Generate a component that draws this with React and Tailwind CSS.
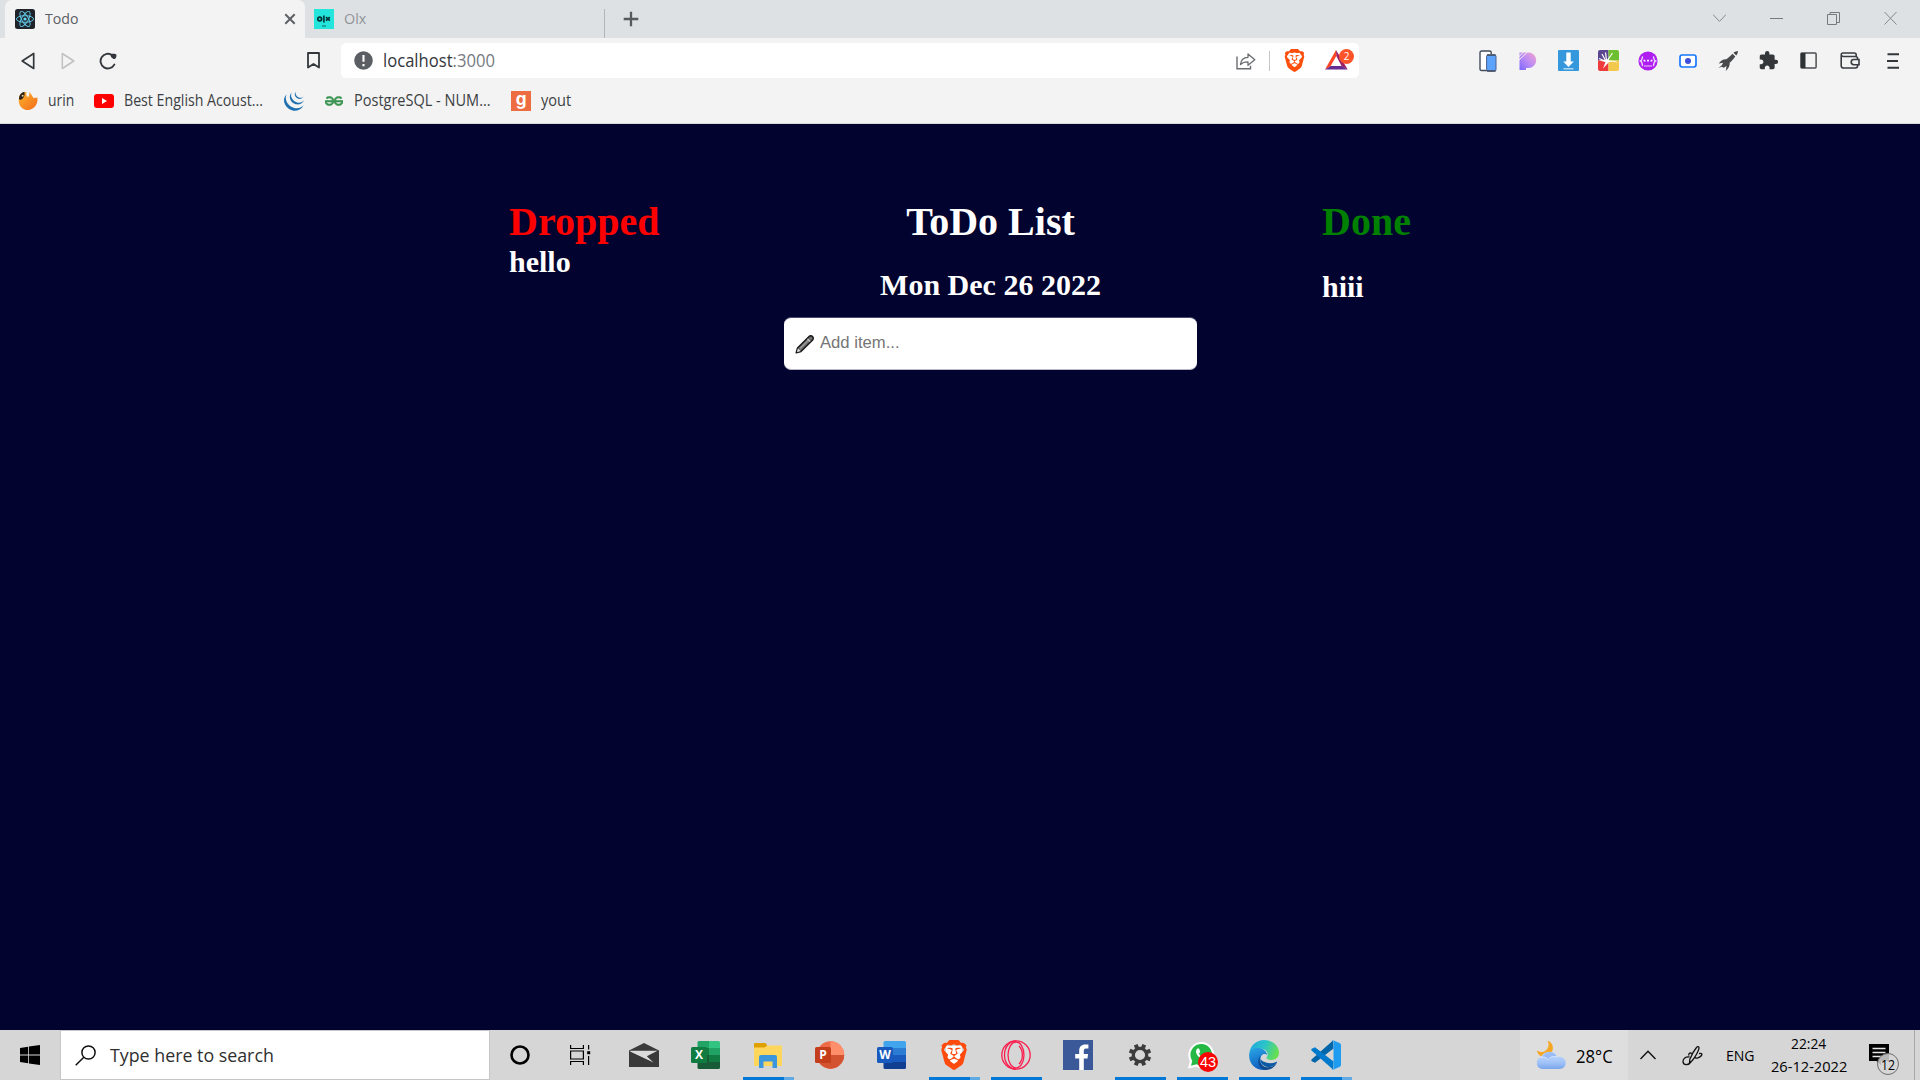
import React, { useLayoutEffect, useRef, useState } from "react";
import { SiBrave, SiJquery, SiGeeksforgeeks } from "react-icons/si";
import { MdExtension } from "react-icons/md";

const UI_FONT = "font-['Open_Sans','Noto_Sans',sans-serif]";

/* Label squeezed horizontally so that it occupies exactly `width` pixels. */
function Label({ width, className = "", children }) {
  const ref = useRef(null);
  const [scale, setScale] = useState(1);
  useLayoutEffect(() => {
    setScale(width / ref.current.offsetWidth);
  }, [width]);
  return (
    <span className="block shrink-0 leading-none" style={{ width }}>
      <span
        ref={ref}
        className={`inline-block origin-left whitespace-nowrap leading-none ${className}`}
        style={{ transform: `scaleX(${scale})` }}
      >
        {children}
      </span>
    </span>
  );
}

const Svg = ({ w, h, vb, className = "", children }) => (
  <svg width={w} height={h} viewBox={vb || `0 0 ${w} ${h}`} fill="none" className={`block shrink-0 ${className}`}>
    {children}
  </svg>
);

const ReactLogo = () => (
  <Svg w={20} h={20}>
    <rect width="20" height="20" rx="2.5" fill="#20232a" />
    <g stroke="#61c9e8" strokeWidth="0.95">
      <ellipse cx="10" cy="10" rx="8.6" ry="3.3" />
      <ellipse cx="10" cy="10" rx="8.6" ry="3.3" transform="rotate(60 10 10)" />
      <ellipse cx="10" cy="10" rx="8.6" ry="3.3" transform="rotate(120 10 10)" />
    </g>
    <circle cx="10" cy="10" r="1.6" fill="#61dafb" />
  </Svg>
);

const OlxLogo = () => (
  <Svg w={20} h={20}>
    <rect width="20" height="20" fill="#23e5db" />
    <circle cx="5.7" cy="10" r="1.9" stroke="#002f34" strokeWidth="1.7" />
    <path d="M9.9 6.6v6.8" stroke="#002f34" strokeWidth="1.6" />
    <path d="M12 8.2l3.8 3.4M15.8 8.2L12 11.6" stroke="#002f34" strokeWidth="1.7" />
    <path d="M8 17h4" stroke="#002f34" strokeWidth="0.7" />
  </Svg>
);

function TabStrip() {
  return (
    <div className="flex h-[38px] bg-[#dee1e4] pl-[5px]">
      <div className="flex h-full w-[300px] items-center rounded-t-[7px] bg-[#f3f3f3] pl-[10px] pr-[9px]">
        <ReactLogo />
        <div className="-mt-[2px] ml-[10px] flex-1">
          <Label width={34} className="text-[15px] text-[#5a5e62]">Todo</Label>
        </div>
        <Svg w={12} h={12}>
          <path d="M1.3 1.3l9.4 9.4M10.7 1.3L1.3 10.7" stroke="#5c6064" strokeWidth="2" />
        </Svg>
      </div>
      <div className="flex w-[299px] items-center pl-[9px]">
        <OlxLogo />
        <div className="-mt-[2px] ml-[10px]">
          <Label width={22} className="text-[15px] text-[#8f9498]">Olx</Label>
        </div>
      </div>
      <div className="h-[29px] w-px self-end bg-[#b3b6b9]" />
      <Svg w={16} h={16} className="ml-[18px] mt-[11px]">
        <path d="M8 .7v14.6M.7 8h14.6" stroke="#56595d" strokeWidth="2.3" />
      </Svg>
      <div className="ml-auto mr-[23px] flex h-[36px] items-center gap-[44px]">
        <Svg w={13} h={14}><path d="M0 3.500l6.500 7 6.500-7" stroke="#85888b" /></Svg>
        <Svg w={13} h={14}><path d="M0 7.500h13" stroke="#777a7d" /></Svg>
        <Svg w={13} h={14}>
          <path d="M.5 3.500h9v10h-9z" stroke="#777a7d" />
          <path d="M3 3V1.500h9.500v10H10" stroke="#777a7d" />
        </Svg>
        <Svg w={13} h={14}><path d="M.5 1l12 12.500M12.500 1L.5 13.500" stroke="#85888b" /></Svg>
      </div>
    </div>
  );
}

const BraveTriangle = () => (
  <div className="relative ml-[19px] h-[26px] w-[30px]">
    <Svg w={23} h={20} className="mt-[4px]">
      <path d="M11 0L0 19.500l5.500-3.200L11.300 6z" fill="#ff4724" />
      <path d="M11 0l11.700 19.500-6-3.200L11.300 6z" fill="#9e1f63" />
      <path d="M0 19.500h22.700l-6-3.600H5.700z" fill="#662d91" />
    </Svg>
    <div className={`absolute left-[14px] top-[-1px] flex h-[15px] w-[15px] items-center justify-center rounded-full bg-[#fb542b] text-[10px] leading-none text-white ${UI_FONT}`}>
      2
    </div>
  </div>
);

const extensions = [
  <Svg key="phone" w={18} h={22}>
    <path d="M8 20.500H2.400A1.400 1.400 0 011 19V2.600A1.600 1.600 0 012.600 1h8a1.600 1.600 0 011.600 1.600V4" fill="#fff" stroke="#434b5c" strokeWidth="1.400" />
    <rect x="7.600" y="5" width="9.400" height="16" rx="1.400" fill="#5ea3fb" stroke="#46618f" />
    <path d="M8 5h8.600M8 21h8.600" stroke="#434b5c" strokeWidth="1.300" />
  </Svg>,
  <Svg key="p" w={18} h={18}>
    <defs>
      <linearGradient id="pGrad" x1="1" y1="0" x2="0" y2="1">
        <stop offset="0" stopColor="#f6a4cf" /><stop offset=".5" stopColor="#bd8cf3" /><stop offset="1" stopColor="#7c66ff" />
      </linearGradient>
    </defs>
    <path d="M.5.500h9a7.700 7.700 0 010 15.500H7v2H.5z" fill="url(#pGrad)" />
    <path d="M0 4.500L4.700 0M0 8L8.500 0" stroke="#f3f3f3" strokeWidth="1" />
  </Svg>,
  <Svg key="dl" w={21} h={21}>
    <rect width="21" height="21" rx="1" fill="#3598dc" />
    <path d="M8.300 2.500h4.400v9h3.100L10.500 17l-5.300-5.500h3.100z" fill="#fff" />
    <path d="M5.500 18.800h10" stroke="#b8dcf5" strokeWidth="1.400" />
  </Svg>,
  <Svg key="quad" w={21} h={21}>
    <path d="M2 0h8.500v10.500H0V2a2 2 0 012-2z" fill="#5b4691" />
    <path d="M10.500 0H19a2 2 0 012 2v8.500H10.500z" fill="#6cbf2e" />
    <path d="M0 10.500h10.500V21H2a2 2 0 01-2-2z" fill="#ee3b3b" />
    <path d="M10.500 10.500H21V19a2 2 0 01-2 2h-8.500z" fill="#f2c94c" />
    <path d="M7.500 10.500L4 4M8.500 10L7.500 2.500M7 11L1 8.500M10 9.500L14.500 3" stroke="#fff" strokeWidth="1.200" />
    <path d="M1 10.500c3.500-.3 6 0 8-1l1.500-1 .5 2c3.500-.3 7 .3 9.500 2.500-3-1.300-6.500-1.500-9.500-1L5 18.500l2.500-6.500z" fill="#fff" />
  </Svg>,
  <Svg key="purple" w={20} h={20}>
    <circle cx="10" cy="10" r="9.600" fill="#ae1ef0" />
    <path d="M4.800 5.500c-1.300 1.500 0 3.500-2.300 4.500 2.300 1 1 3 2.300 5M15.200 5.500c1.300 1.500 0 3.500 2.300 4.500-2.300 1-1 3-2.300 5" stroke="#efd5fb" strokeWidth="1.400" />
    <path d="M5.600 9.600h1.800M9.100 9.600h1.800M12.600 9.600h1.800" stroke="#fff" strokeWidth="1.600" />
    <path d="M6 15h8" stroke="#d68af5" strokeWidth="1.600" />
  </Svg>,
  <Svg key="cam" w={18} h={14}>
    <rect x="1" y="1" width="16" height="12" rx="2.200" fill="#fff" stroke="#1677ff" strokeWidth="1.700" />
    <circle cx="9" cy="7" r="3" fill="#3f4fd8" />
  </Svg>,
  <Svg key="rocket" w={20} h={20}>
    <path d="M20 0c-1 0-3.500.8-4.500 1.700l2.800 2.800C19.200 3.500 20 1 20 0z" fill="#444" />
    <path d="M14.600 2.700C12 5 10 7 8.300 8.300c-2.500-.3-5.500 1-7.600 4.300l4.400-.9-1.300 2.600L.5 17l3.200-1.200 2.100.9L8.500 15l-.700 5c2.700-2.500 4.300-5.500 3.900-8.200C13.500 10 15.600 8 17.300 5.400z" fill="#484a4c" />
  </Svg>,
  <MdExtension key="puzzle" size={21} color="#33373a" />,
  <Svg key="side" w={17} h={17}>
    <rect x=".9" y=".9" width="15.200" height="15.200" rx="1" stroke="#4b4e52" strokeWidth="1.500" />
    <path d="M1 1h4.500v15H1z" fill="#2f3235" />
  </Svg>,
  <Svg key="wallet" w={20} h={17}>
    <path d="M1.200 3.500v10.300a2.200 2.200 0 002.200 2.200h12a2.200 2.200 0 002.200-2.200V6.700a2.200 2.200 0 00-2.200-2.200H3.200a2 2 0 01-2-1.800A1.700 1.700 0 012.900 1h11.300a2 2 0 012 2v1.500" stroke="#393c40" strokeWidth="1.600" />
    <path d="M19 7.500h-5.200a2.600 2.600 0 000 5.200H19z" fill="#f3f3f3" stroke="#393c40" strokeWidth="1.600" />
  </Svg>,
  <Svg key="menu" w={12} h={16}>
    <path d="M.5 1.300h11.500M0 8h11M.5 14.700h11.500" stroke="#33373a" strokeWidth="2" />
  </Svg>,
];

function Toolbar() {
  return (
    <div className="flex h-[45px] items-center bg-[#f3f3f3]">
      <Svg w={14} h={18} className="ml-[21px]"><path d="M12.700 1.500v15L1.200 9z" stroke="#33373b" strokeWidth="1.700" strokeLinejoin="round" /></Svg>
      <Svg w={14} h={18} className="ml-[26px]"><path d="M1.300 1.500v15L12.800 9z" stroke="#bfc1c3" strokeWidth="1.500" strokeLinejoin="round" /></Svg>
      <Svg w={18} h={18} className="ml-[24px]">
        <path d="M15.300 12.600A7.300 7.300 0 1113.300 3.300" stroke="#33373b" strokeWidth="1.900" strokeLinecap="round" />
        <path d="M11.500 2.200c2-.7 5.400-.6 5.800.3.500 1.200-.2 4-1.500 4.500-2.300.3-4.800-2.800-4.300-4.800z" fill="#33373b" />
      </Svg>
      <Svg w={13} h={17} className="ml-[190px]"><path d="M1 1h11v14.500l-5.500-3.600L1 15.500z" stroke="#33373b" strokeWidth="1.800" strokeLinejoin="round" /></Svg>
      <div className="ml-[21px] flex h-[35px] w-[1018px] items-center rounded-[5px] bg-white pl-[13px]">
        <Svg w={19} h={19}>
          <circle cx="9.500" cy="9.500" r="9.300" fill="#5b5f63" />
          <path d="M9.500 4v6.800M9.500 13v2.200" stroke="#fff" strokeWidth="2.100" />
        </Svg>
        <div className="ml-[10px] flex-1">
          <Label width={112} className="text-[17.5px] text-[#33373b]">
            localhost<span className="text-[#777b7f]">:3000</span>
          </Label>
        </div>
        <Svg w={20} h={18}>
          <path d="M1 4.500v12.300h13.500v-3" stroke="#696c70" strokeWidth="1.400" />
          <path d="M4.500 12.500c.4-4.500 3-7 7.500-7.200V2l6.800 5.700L12 13.300V9.800c-3.500-.1-5.700.7-7.500 2.700z" stroke="#696c70" strokeWidth="1.300" strokeLinejoin="round" />
        </Svg>
        <div className="ml-[13px] h-[20px] w-px bg-[#c4c6c8]" />
        <SiBrave size={23} color="#fb4f0b" className="ml-[13px] shrink-0" />
        <div className="w-[53px]"><BraveTriangle /></div>
      </div>
      <div className="ml-[108px] grid grid-cols-[41px_40px_40px_40px_40px_40px_40px_40px_40px_44px_42px] items-center justify-items-center">
        {extensions}
      </div>
    </div>
  );
}

const FoxIcon = () => (
  <Svg w={20} h={20}>
    <defs>
      <linearGradient id="fox" x1="0" y1="0" x2="1" y2="1"><stop offset="0" stopColor="#ffb52e" /><stop offset="1" stopColor="#f26a1b" /></linearGradient>
    </defs>
    <path d="M1.500 5C3 2 6 .5 8.500 1c-.5 1.500-.5 4 1.500 5 1.500-.8 1.500-3 1.300-5.300.8 1.300 2.200 2.300 3.200 4.800l1 1.500 3.800-.5c1.200 6.500-3.300 12.300-9.300 12.500C3 19-1 12.500 1.500 5z" fill="url(#fox)" />
    <path d="M1 8C1 4.500 3 1.600 6.300.8 7.300 4 6 7.500 2.500 9z" fill="#2a211b" />
    <circle cx="4.700" cy="4.800" r="1" fill="#f5d089" />
  </Svg>
);

function Bookmarks() {
  const text = "text-[16px] text-[#3b3f43]";
  return (
    <div className="flex h-[41px] items-center border-b border-[#d7dade] bg-[#f3f3f3] pb-[4px] pl-[18px]">
      <FoxIcon />
      <div className="-mt-[2px] ml-[10px]"><Label width={26} className={text}>urin</Label></div>
      <Svg w={20} h={14} className="ml-[20px]">
        <rect width="20" height="14" rx="3" fill="#f00" /><path d="M8 4l5 3-5 3z" fill="#fff" />
      </Svg>
      <div className="-mt-[2px] ml-[10px]"><Label width={139} className={text}>Best English Acoust...</Label></div>
      <SiJquery size={20} color="#1d6fb0" className="ml-[21px] shrink-0" />
      <SiGeeksforgeeks size={18} color="#3a9450" stroke="#3a9450" strokeWidth={0.8} className="ml-[21px] shrink-0" />
      <div className="-mt-[2px] ml-[11px]"><Label width={137} className={text}>PostgreSQL - NUM...</Label></div>
      <div className="ml-[20px] flex h-[20px] w-[20px] justify-center bg-[#ee6c41] font-['Inter',sans-serif] text-[17px] font-bold leading-[16px] text-white">g</div>
      <div className="-mt-[2px] ml-[10px]"><Label width={30} className={text}>yout</Label></div>
    </div>
  );
}

function TodoPage() {
  return (
    <main className="grid h-[906px] grid-cols-[274px_413px_1fr] items-start bg-[#02042f] pl-[510px] pt-[75px] font-['Liberation_Serif',serif] font-bold text-white">
      <section className="-ml-[1px]">
        <h1 className="text-[40px] leading-[46px] text-[#ff0000]">Dropped</h1>
        <h2 className="text-[30px] leading-[34px]">hello</h2>
      </section>
      <section className="text-center">
        <h1 className="text-[40px] leading-[46px]">ToDo List</h1>
        <h2 className="mt-[23px] text-[30px] leading-[34px]">Mon Dec 26 2022</h2>
        <div className="mt-[15px] flex h-[53px] items-center rounded-[7px] border-b border-t border-b-[#b9b9c6] border-t-[#4a4b6c] bg-white pl-[11px] text-left">
          <Svg w={20} h={20}>
            <path d="M1.200 18.800L2.500 14 14.300 2.200a2.600 2.600 0 013.600 3.600L6 17.600z" fill="#6b6b6b" stroke="#151515" strokeWidth="1.400" strokeLinejoin="round" />
            <path d="M5 14.500L14 5.500" stroke="#9a9a9a" strokeWidth="1.400" />
            <path d="M12.500 5l2.600 2.600" stroke="#c4c4c4" strokeWidth="1.200" />
            <path d="M2.900 14.500l2.600 2.500-3.600 1.200z" fill="#e4e4e4" />
          </Svg>
          <input
            placeholder="Add item..."
            className="ml-[5px] w-[340px] bg-transparent font-['Liberation_Sans',sans-serif] text-[16.670px] font-normal text-black outline-none placeholder:text-[#757575]"
          />
        </div>
      </section>
      <section className="pl-[125px]">
        <h1 className="text-[40px] leading-[46px] text-[#008000]">Done</h1>
        <h2 className="mt-[25px] text-[30px] leading-[34px]">hiii</h2>
      </section>
    </main>
  );
}

const OfficeBadge = ({ color, y = 7, children }) => (
  <>
    <rect x="0" y={y} width="16" height="16" rx="1.500" fill={color} />
    <text x="8" y={y + 12.200} textAnchor="middle" fontSize="12" fontWeight="700" fill="#fff" fontFamily="Open Sans, sans-serif">{children}</text>
  </>
);

const Excel = () => (
  <Svg w={30} h={28}>
    <path d="M8 0h10v7H6.500V1.500A1.500 1.500 0 018 0z" fill="#21a366" /><path d="M18 0h9.500A1.500 1.500 0 0129 1.500V7H18z" fill="#33c481" />
    <path d="M6.500 7H18v7H6.500z" fill="#107c41" /><path d="M18 7h11v7H18z" fill="#21a366" />
    <path d="M6.500 14H18v7H6.500z" fill="#185c37" /><path d="M18 14h11v7H18z" fill="#107c41" />
    <path d="M6.500 21H29v5.500a1.500 1.500 0 01-1.500 1.500H8a1.500 1.500 0 01-1.500-1.500z" fill="#185c37" />
    <OfficeBadge color="#107c41" y={6}>X</OfficeBadge>
  </Svg>
);
const Folder = () => (
  <Svg w={28} h={25}>
    <path d="M1 0h10.500L13 2v3H0V1a1 1 0 011-1z" fill="#e0a000" />
    <path d="M0 4.500h10.500l3-2H27a1 1 0 011 1V22a1 1 0 01-1 1H1a1 1 0 01-1-1z" fill="#ffd65c" />
    <path d="M5 25V14a2 2 0 012-2h14a2 2 0 012 2v11h-4.500v-6.500h-9V25z" fill="#3a96dd" />
  </Svg>
);
const PowerPoint = () => (
  <Svg w={30} h={28}>
    <circle cx="15.500" cy="14" r="13.700" fill="#ed6c47" />
    <path d="M15.500.3A13.700 13.700 0 0129.200 14H15.500z" fill="#ff8f6b" />
    <path d="M29.200 14a13.700 13.700 0 01-26 6L10 14z" fill="#d35230" />
    <OfficeBadge color="#c43e1c" y={6}>P</OfficeBadge>
  </Svg>
);
const Word = () => (
  <Svg w={30} h={28}>
    <path d="M8 0h19.500A1.500 1.500 0 0129 1.500V7H6.500V1.500A1.500 1.500 0 018 0z" fill="#41a5ee" />
    <path d="M6.500 7H29v7H6.500z" fill="#2b7cd3" /><path d="M6.500 14H29v7H6.500z" fill="#185abd" />
    <path d="M6.500 21H29v5.500a1.500 1.500 0 01-1.500 1.500H8a1.500 1.500 0 01-1.500-1.500z" fill="#103f91" />
    <OfficeBadge color="#185abd" y={6}>W</OfficeBadge>
  </Svg>
);
const Mail = () => (
  <Svg w={30} h={24}>
    <path d="M0 7.500L15 0l15 7.500V24H0z" fill="#3a3a3a" />
    <path d="M1.500 7.800h27L17.800 13.300 24.500 19.500 1 8.500z" fill="#dcdcdc" />
  </Svg>
);
const Brave = () => (
  <div className="relative flex h-[30px] w-[30px] items-center justify-center">
    <Svg w={20} h={22} className="absolute left-[5px] top-[4px]"><path d="M2 2h16v11l-8 8-8-8z" fill="#fff" /></Svg>
    <SiBrave size={30} color="#ff4a0e" className="relative" />
  </div>
);
const Opera = () => (
  <Svg w={30} h={30}>
    <g stroke="#fa1e4e" strokeWidth="1.300">
      <circle cx="15" cy="15" r="14.200" />
      <ellipse cx="15" cy="15" rx="8" ry="13" />
      <path d="M15 .8C9 .8 3.500 6.500 3.500 15S9 29.200 15 29.200M18 6c4.500 4.500 4.500 13.500 0 18" />
    </g>
  </Svg>
);
const Facebook = () => (
  <Svg w={30} h={30}>
    <path d="M0 0h30v30H0z" fill="#3b5998" />
    <path d="M16.200 30V18.500h-4V14h4v-3.500c0-4 2.300-6.100 6-6.100 1.600 0 2.800.1 3.200.2v4h-2.300c-1.800 0-2.300 1-2.300 2.300V14h4.300l-.6 4.500h-3.700V30z" fill="#fff" />
  </Svg>
);
const Gear = () => (
  <Svg w={24} h={24} className="-ml-[1px]">
    <circle cx="12" cy="12" r="6.700" stroke="#3c3c3c" strokeWidth="3.200" />
    <g fill="#3c3c3c">
      {[22.5, 67.5, 112.5, 157.5, 202.5, 247.5, 292.5, 337.5].map((a) => (
        <rect key={a} x="10" y="0.800" width="4" height="4.500" transform={`rotate(${a} 12 12)`} />
      ))}
    </g>
  </Svg>
);
const WhatsApp = () => (
  <div className="relative h-[30px] w-[30px]">
    <Svg w={28} h={28} className="mt-[1px]">
      <path d="M1 27.500l1.800-7.500A13 13 0 1115 27c-2.300.1-4.300-.5-6-1.300z" fill="#fff" />
      <path d="M4 24.800l1.300-5A10.800 10.800 0 1114.800 24.500c-2 0-3.700-.5-5.300-1.300z" fill="#25b845" />
      <path d="M10.500 7.500c-2.500 2-1.500 5 .5 7.500 2.500 3.500 6 5.500 8.500 5l1.500-3-3.500-2-1.500 1.500c-2-.8-3.500-2.500-4-4l1.300-1.800-1.300-3.200z" fill="#fff" />
    </Svg>
    <div className="absolute left-[11px] top-[12px] flex h-[20px] w-[20px] items-center justify-center rounded-full bg-[#f90303] font-['Liberation_Sans',sans-serif] text-[14.500px] leading-none text-white">43</div>
  </div>
);
const Edge = () => (
  <Svg w={30} h={30}>
    <defs>
      <linearGradient id="eTop" x1="0" y1="0.200" x2="1" y2="0.500"><stop offset="0" stopColor="#1fa7de" /><stop offset=".5" stopColor="#2bc4c9" /><stop offset="1" stopColor="#68e04e" /></linearGradient>
      <linearGradient id="eLeft" x1="0" y1="0" x2="0.300" y2="1"><stop offset="0" stopColor="#2aa7e5" /><stop offset="1" stopColor="#0f5fc0" /></linearGradient>
    </defs>
    <path d="M.3 13C1.500 5 8 0 15 0c9 0 15 6.500 15 12.500 0 4.800-3.500 7.500-7.500 7.500-3.500 0-5.500-1.300-5-2.300 2.500-3 1-7.700-4-8.700C8 8 2.500 9.500.3 13z" fill="url(#eTop)" />
    <path d="M.2 14C1 10 5 7.500 9.500 8c5 .5 8.500 3.500 8.500 7-2-2-6.500-1-6.500 4.500 0 5 4 9 8.500 9.500C10 32.500-.8 26 .2 14z" fill="url(#eLeft)" />
    <path d="M12 15.500c-3 4-1 10 4.500 11.500 4 1 8.500-.5 11.300-3.800-2 4-6.300 6.800-11.300 6.800C10 29.500 6.500 20 12 15.500z" fill="#114a8b" />
    <path d="M11.600 19c-.5 5 4 8.500 9 8 3-.3 6-2 7.400-4.500.3-.6-.2-.9-.8-.6-7 3-14.200 0-15.600-2.900z" fill="#0c59a4" />
  </Svg>
);
const VSCode = () => (
  <Svg w={30} h={30}>
    <path d="M22.500 8.500L4 22.800.8 21.300c-.7-.5-.7-1.300 0-2L22 .5z" fill="#0065a9" />
    <path d="M22.500 21.500L4 7.200.8 8.700c-.7.500-.7 1.300 0 2L22 29.500z" fill="#007acc" />
    <path d="M22 .3l6.500 2.800c1 .5 1.500 1.200 1.500 2.200v19.400c0 1-.5 1.700-1.500 2.200L22 29.700c-.8.200-1.300 0-1.800-.5 1 .7 2.300.2 2.300-1.200V2c0-1.400-1.300-1.900-2.300-1.200.5-.5 1-.7 1.800-.5z" fill="#1f9cf0" />
  </Svg>
);

const apps = [
  { id: "mail", icon: <Mail /> },
  { id: "excel", icon: <Excel /> },
  { id: "files", icon: <Folder />, open: "multi" },
  { id: "ppt", icon: <PowerPoint /> },
  { id: "word", icon: <Word /> },
  { id: "brave", icon: <Brave />, open: "multi" },
  { id: "opera", icon: <Opera />, open: "single" },
  { id: "fb", icon: <Facebook /> },
  { id: "settings", icon: <Gear />, open: "single" },
  { id: "wa", icon: <WhatsApp />, open: "single" },
  { id: "edge", icon: <Edge />, open: "single" },
  { id: "code", icon: <VSCode />, open: "multi" },
];

const Weather = () => (
  <Svg w={30} h={30}>
    <defs>
      <linearGradient id="cloud" x1="0" y1="0" x2="0" y2="1"><stop offset="0" stopColor="#c4dcff" /><stop offset=".6" stopColor="#a3c4f8" /><stop offset="1" stopColor="#7aa5ec" /></linearGradient>
    </defs>
    <path d="M11.500.8c2.500 4 .5 9.700-4 10.900-2.700.700-4.800-.2-6.500-1.400C1.500 15 5 17 9 16.500c5-.600 8.300-5 7.800-9.500-.300-3-2.300-5.500-5.300-6.200z" fill="#f5a623" />
    <path d="M6.500 29A6 6 0 015 17.300 9 9 0 0121.500 17c4.500-1 8.300 2 8.300 6a6 6 0 01-6 6z" fill="url(#cloud)" />
    <path d="M6.500 17.300A7.700 7.700 0 0120.500 16l1 1.200c-4-1-7 .3-9 3-1.500-2.200-3.500-3.100-6-2.900z" fill="#7fa9ee" opacity=".55" />
    <path d="M5 17.300c3-.8 5.500.2 7 2.500 2-3 5.500-4 9.500-2.800" stroke="#dbe8ff" />
  </Svg>
);

function Taskbar() {
  return (
    <footer className="flex h-[50px] items-center bg-[#d6d6d6] text-black">
      <Svg w={20} h={20} className="ml-[20px]">
        <path d="M0 2.900l8.200-1.200v7.900H0zM9 1.600L20 0v9.500H9zM0 10.400h8.200v7.900L0 17.100zM9 10.400h11V20L9 18.400z" fill="#000" />
      </Svg>
      <div className="ml-[20px] flex h-[50px] w-[430px] items-center border border-[#c6c6c6] bg-white pl-[14px]">
        <Svg w={21} h={21}>
          <circle cx="13.500" cy="7.500" r="6.600" stroke="#111" strokeWidth="1.500" /><path d="M8.800 12.200L.7 20.300" stroke="#111" strokeWidth="1.500" />
        </Svg>
        <div className="ml-[14px]"><Label width={164} className="text-[19px] text-[#2f2f2f]">Type here to search</Label></div>
      </div>
      <Svg w={20} h={20} className="ml-[20px]"><circle cx="10" cy="10" r="8.500" stroke="#000" strokeWidth="2.600" /></Svg>
      <Svg w={21} h={20} className="ml-[40px]">
        <path d="M.6 0v3.500h12.800V0M.6 20v-3.500h12.800V20M.6 6h12.800v8H.6zM18.600 0v4.500M18.600 11v9" stroke="#000" strokeWidth="1.200" />
        <path d="M17.200 6.200h3v3h-3z" fill="#000" />
      </Svg>
      <nav className="ml-[22px] flex h-full">
        {apps.map((a) => (
          <div key={a.id} className="relative flex h-full w-[62px] items-center justify-center">
            {a.icon}
            {a.open && (
              <div className="absolute bottom-0 left-[6px] flex h-[3px] w-[51px] bg-[#0078d7]">
                {a.open === "multi" && <div className="ml-auto h-full w-[10px] bg-[#60aae4]" />}
              </div>
            )}
          </div>
        ))}
      </nav>
      <div className="ml-auto flex h-full items-center">
        <div className="flex h-full w-[108px] items-center bg-[#dedede] pl-[16px]">
          <Weather />
          <div className="ml-[10px] mt-[1px]"><Label width={37} className="text-[18px]">28°C</Label></div>
        </div>
        <Svg w={16} h={10} className="ml-[12px]"><path d="M.5 9L8 1.300 15.500 9" stroke="#111" strokeWidth="1.400" /></Svg>
        <Svg w={21} h={21} className="ml-[26px]">
          <path d="M14.500 2.500c1-1.500 2.800-1 2.500.800C16.300 6 13 12 10.300 15.500L7.500 18l.3-3.700C9.500 10 12 5.500 14.500 2.500z" stroke="#111" strokeWidth="1.300" />
          <path d="M10 8.500c-3-1.500-3.500 1-3 2M7.500 12c-4-.5-6.500 1.500-6.500 4.500 0 4 5.500 4 8 .500M13 12c.5 2.500 5 .5 6.500-1.500 1-1.800-.5-2.500-2.500-1.800" stroke="#111" strokeWidth="1.300" />
        </Svg>
        <div className="ml-[23px]"><Label width={29} className="text-[15px]">ENG</Label></div>
        <div className="mr-[1px] -mt-[1px] ml-[15px] flex w-[77px] flex-col items-center gap-[7px]">
          <Label width={35} className="text-[15px]">22:24</Label>
          <Label width={76} className="text-[15px]">26-12-2022</Label>
        </div>
        <div className="relative ml-[21px] h-[22px] w-[31px]">
          <Svg w={20} h={22}>
            <path d="M0 0h20v17H12v4.500L7.500 17H0z" fill="#000" />
            <path d="M3.500 4.500h13M3.500 8.500h13M3.500 12.500h9" stroke="#e6e6e6" strokeWidth="1.400" />
          </Svg>
          <div className="absolute left-[8px] top-[9px] flex h-[22px] w-[22px] items-center justify-center rounded-full border border-[#6d6d6d] bg-[#d6d6d6]/85">
            <Label width={14} className="text-[15px] font-medium">12</Label>
          </div>
        </div>
        <div className="ml-[14px] h-full w-px bg-[#a9a9a9]" />
        <div className="w-[5px]" />
      </div>
    </footer>
  );
}

export default function App() {
  return (
    <div className={`flex h-[1080px] w-[1920px] flex-col overflow-hidden ${UI_FONT}`}>
      <TabStrip />
      <Toolbar />
      <Bookmarks />
      <TodoPage />
      <Taskbar />
    </div>
  );
}
